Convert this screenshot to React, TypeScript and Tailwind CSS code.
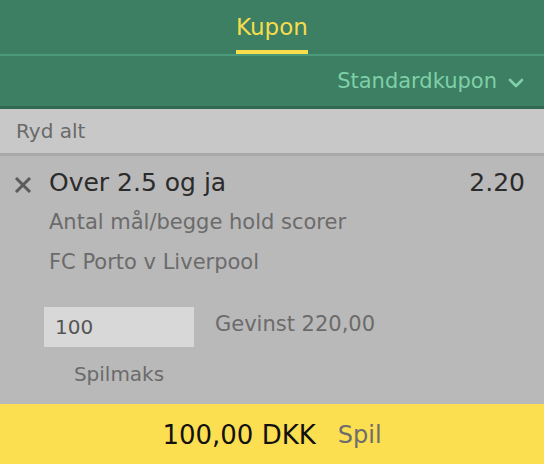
import React from 'react'

const font = { fontFamily: '"DejaVu Sans", "Liberation Sans", sans-serif' }

function Chevron() {
  return (
    <svg width="16" height="10" viewBox="0 0 16 10" className="ml-[11px] mt-[2px]">
      <path d="M2 2l6 6 6-6" fill="none" stroke="#7fd0a8" strokeWidth="2.6" strokeLinecap="round" strokeLinejoin="round" />
    </svg>
  )
}

function RemoveIcon() {
  return (
    <svg width="18" height="16" viewBox="0 0 18 16" className="mt-[9px]">
      <path d="M2 1l14 14M16 1L2 15" stroke="#5c5c5c" strokeWidth="3" />
    </svg>
  )
}

export default function App() {
  return (
    <div style={font} className="w-[544px] h-[464px] flex flex-col overflow-hidden bg-[#b9b9b9]">
      {/* tabs */}
      <div className="h-[54px] bg-[#3c7f62] flex justify-center items-end">
        <div className="flex flex-col items-center">
          <span className="text-[23px] leading-[28px] text-[#f6dd4c] mb-[9px]">Kupon</span>
          <div className="h-[4px] w-full bg-[#fbdc4d]" />
        </div>
      </div>
      <div className="h-[2px] bg-[#4c9a77]" />
      <div className="h-[53px] bg-[#3c7f62] border-b-[3px] border-[#2f6a50] flex items-center justify-end pr-[20px] pt-[2px]">
        <span className="text-[21px] text-[#7fd0a8]">Standardkupon</span>
        <Chevron />
      </div>

      {/* clear row */}
      <div className="h-[47px] bg-[#c8c8c8] border-b-[3px] border-[#a9a9a9] flex items-center px-[16px]">
        <span className="text-[20px] text-[#6a6a6a]">Ryd alt</span>
      </div>

      {/* selection */}
      <div className="flex-1 pt-[12px]">
        <div className="flex items-start pl-[14px] pr-[19px]">
          <RemoveIcon />
          <div className="flex-1 ml-[17px]">
            <div className="flex justify-between text-[25px] leading-[30px] text-[#2b2b2b]">
              <span>Over 2.5 og ja</span>
              <span>2.20</span>
            </div>
            <div className="mt-[4px] text-[21px] leading-[40px] text-[#6b6b6b]">Antal mål/begge hold scorer</div>
            <div className="text-[21px] leading-[40px] text-[#6b6b6b]">FC Porto v Liverpool</div>
          </div>
        </div>

        <div className="flex items-start pl-[44px] mt-[25px]">
          <div className="w-[150px] flex flex-col">
            <div className="h-[40px] bg-[#d8d8d8] flex items-center pl-[11px] text-[20px] text-[#555555]">100</div>
            <span className="mt-[13px] text-center text-[20px] leading-[28px] text-[#6b6b6b]">Spilmaks</span>
          </div>
          <span className="ml-[21px] h-[40px] flex items-center text-[21px] text-[#6b6b6b] -mt-[2px]">Gevinst 220,00</span>
        </div>
      </div>

      {/* place bet */}
      <div className="h-[60px] bg-[#fcdf50] flex items-center justify-center gap-[22px] pt-[2px]">
        <span className="text-[26px] text-[#111111]">100,00 DKK</span>
        <span className="text-[24px] text-[#6d6d6d]">Spil</span>
      </div>
    </div>
  )
}
